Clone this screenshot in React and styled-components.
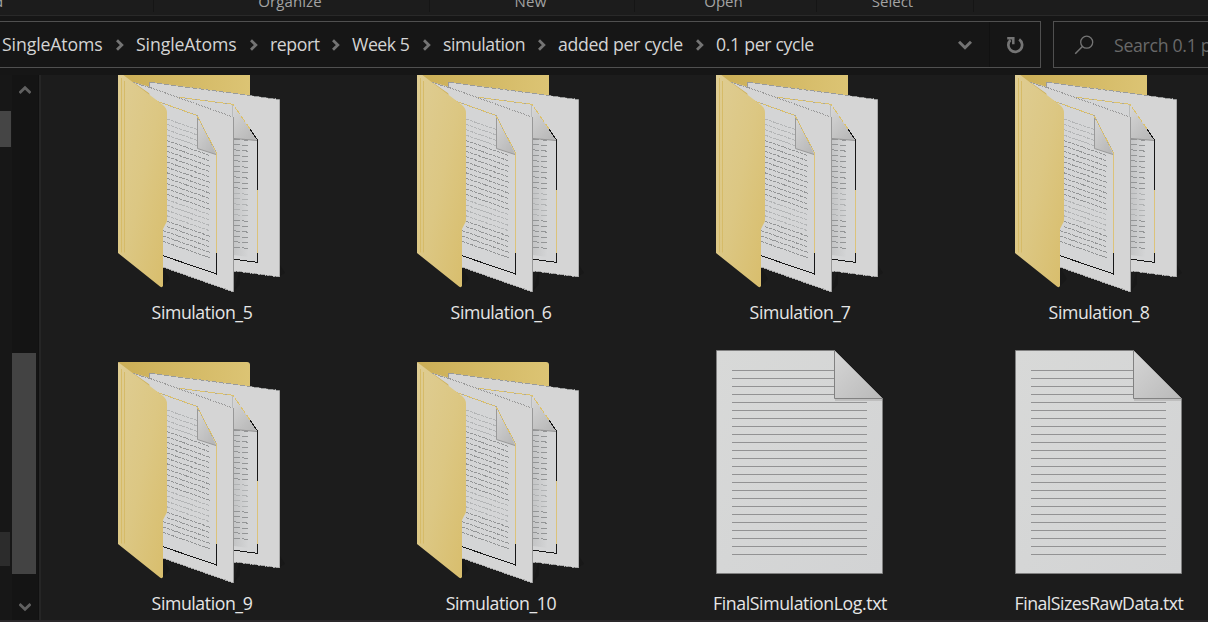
import React from "react";
import styled, { createGlobalStyle } from "styled-components";

const Global = createGlobalStyle`
  * { box-sizing: border-box; }
  body { margin: 0; background: #161616; overflow: hidden; font-family: "Open Sans", "Noto Sans", sans-serif; }
  svg { display: block; flex: none; }
`;

const Window = styled.div`
  width: 1208px; height: 622px; overflow: hidden;
  display: flex; flex-direction: column; background: #161616;
`;
const Ribbon = styled.div`
  height: 16px; flex: none; display: flex; overflow: hidden;
  background: #1c1c1c; border-bottom: 1px solid #292929;
`;
const RibbonGroup = styled.div`
  width: ${(p) => p.$width}px; height: 12px; flex: none;
  display: flex; justify-content: ${(p) => (p.$edge ? "flex-start" : "center")};
  border-right: 1px solid #151515;
`;
const RibbonLabel = styled.span`
  height: 20px; margin-top: -9px; margin-left: ${(p) => p.$shift || 0}px;
  font-size: 15px; line-height: 20px; letter-spacing: ${(p) => p.$track || 0}px; color: #a3a3a3; white-space: nowrap;
`;
const NavBar = styled.div`
  height: 59px; flex: none; display: flex; padding-top: 5px; gap: 12px; overflow: hidden;
`;
const AddressBox = styled.div`
  width: 1041px; height: 47px; flex: none; display: flex; align-items: center;
  border: 1px solid #505050; border-left: 0; padding-left: 2px; background: #161616;
`;
const Crumb = styled.span`
  width: ${(p) => p.$width}px; flex: none; white-space: nowrap; padding-bottom: 2px;
  font-size: 17.7px; line-height: 24px; letter-spacing: ${(p) => p.$track}px; color: #d4d4d4;
`;
const CrumbGap = styled.span`
  width: 33px; flex: none; display: flex; justify-content: center;
`;
const AddressTools = styled.div`
  margin-left: auto; height: 100%; display: flex; align-items: center;
`;
const Tool = styled.div`
  width: ${(p) => p.$width}px; height: 100%; display: flex; align-items: center; justify-content: center;
  border-right: ${(p) => (p.$divided ? "1px solid #111" : "0")};
`;
const SearchBox = styled.div`
  width: 300px; height: 47px; flex: none; display: flex; align-items: center;
  gap: 20px; padding-left: 20px; border: 1px solid #505050; background: #161616;
  font-size: 17.7px; letter-spacing: -0.3px; color: #696969; white-space: nowrap;
`;
const Body = styled.div`
  height: 545px; flex: none; display: flex; overflow: hidden;
`;
const TreeEdge = styled.div`
  width: 12px; padding-top: 36px; background: #171717;
`;
const EdgeThumb = styled.div`
  width: ${(p) => p.$width}px; height: ${(p) => p.$height}px;
  margin-bottom: ${(p) => p.$after || 0}px; background: ${(p) => p.$color};
`;
const ScrollBar = styled.div`
  width: 26px; display: flex; flex-direction: column; align-items: center;
  justify-content: space-between; padding: 10px 1px 8px 0; background: #141414;
`;
const ScrollThumb = styled.div`
  width: 24px; height: 221px; margin-top: 229px; margin-right: 1px; background: #434343;
`;
const Divider = styled.div`
  width: 3px; border-left: 1px solid #111; background: #252525;
`;
const Files = styled.div`
  flex: 1; height: 545px; overflow: hidden; background: #1c1c1c;
`;
const Grid = styled.div`
  display: grid; grid-template-columns: repeat(4, 299px); grid-auto-rows: 291px;
  margin: -26px 0 0 11px; width: 1196px;
`;
const Item = styled.div`
  display: flex; flex-direction: column; align-items: center; padding-right: 3px;
`;
const Name = styled.span`
  width: 200px; margin: -1px 0 0 4px; text-align: center; font-size: 17.7px; line-height: 24px;
  letter-spacing: ${(p) => p.$track}px; color: #e6e6e6; white-space: nowrap;
`;
const StatusEdge = styled.div`
  height: 2px; flex: none; background: #2a282a;
`;

const Chevron = ({ size = "right" }) => {
  if (size === "right")
    return (
      <svg width="8" height="12" viewBox="0 0 8 12"><path d="M1 1.3L5.8 6 1 10.7" fill="none" stroke="#747474" strokeWidth="2.8" /></svg>
    );
  return (
    <svg width="14" height="10" viewBox="0 0 14 10"><path d="M1 1.7L7 7.7 13 1.7" fill="none" stroke="#737373" strokeWidth="3" /></svg>
  );
};

const ScrollArrow = ({ up }) => (
  <svg width="12" height="10" viewBox="0 0 12 10">
    <path d={up ? "M0.5 8L6 2.7 11.5 8" : "M0.5 2L6 7.3 11.5 2"} fill="none" stroke="#606060" strokeWidth="2.8" />
  </svg>
);

const Reload = () => (
  <svg width="18" height="18" viewBox="0 0 18 18">
    <path d="M13.2 3.4A6.9 6.9 0 1 1 4.5 4" fill="none" stroke="#757575" strokeWidth="2.7" />
    <path d="M1.2 2.2H7.3V8.2" fill="none" stroke="#757575" strokeWidth="2.5" />
  </svg>
);

const Magnifier = () => (
  <svg width="20" height="20" viewBox="0 0 20 20">
    <circle cx="12.7" cy="7.2" r="6" fill="none" stroke="#747474" strokeWidth="1.3" />
    <path d="M8.4 11.5L1.2 18.8" stroke="#747474" strokeWidth="1.5" />
  </svg>
);

const frontLines = Array.from({ length: 24 }, (_, i) => {
  const y = 70 + i * 5.38;
  const x0 = i > 20 ? 63 : 67;
  const x1 = i < 4 ? 97 : 110;
  return { d: `M${x0} ${y + (x0 - 67) * 0.35}L${x1} ${y + (x1 - 67) * 0.35}`, soft: i < 4 || (i > 14 && i < 19) };
});
const backLines = Array.from({ length: 21 }, (_, i) => {
  const y = 90 + i * 5.4;
  return { d: `M134 ${y}L149.5 ${y + 1.5}`, soft: i > 9 && i < 15 };
});

const FolderIcon = ({ id }) => (
  <svg width="200" height="252" viewBox="0 0 200 252">
    <defs>
      <linearGradient id={`back${id}`}><stop offset="0" stopColor="#cbae56" /><stop offset="1" stopColor="#dcc474" /></linearGradient>
      <linearGradient id={`cover${id}`} x1="0" y1="0" x2="1" y2="1"><stop offset="0" stopColor="#dfcd93" /><stop offset=".5" stopColor="#dcc783" /><stop offset="1" stopColor="#d8bd6b" /></linearGradient>
      <linearGradient id={`fold${id}`} x1="0" y1="0" x2=".7" y2="1"><stop offset="0" stopColor="#d7d7d7" /><stop offset="1" stopColor="#b8b8b8" /></linearGradient>
      <linearGradient id={`shade${id}`}><stop offset="0" stopColor="#b9babb" /><stop offset="1" stopColor="#d5d6d7" /></linearGradient>
    </defs>
    <path d="M134 221L180 227L185 224L180 216ZM63 218V237L70 230ZM134 242L140 235V220Z" fill="#181818" />
    <path d="M18 22H147Q150 22 150 25V80H60Z" fill={`url(#back${id})`} />
    <path d="M49.5 33L180 50.5V228L134 222L49 200Z" fill="#d5d5d5" />
    <g shapeRendering="crispEdges">
      <path d="M50 33.3L179.5 50.5" fill="none" stroke="#999b9b" strokeDasharray="5 2" />
      <path d="M179.5 50.5V227.5" stroke="#aaa" />
    </g>
    <path d="M77 48L133 55.5L157 91V213L134 210V68Z" fill="#d4d5d6" />
    <path d="M134 91H149V208L134 206Z" fill={`url(#shade${id})`} opacity=".6" />
    <g shapeRendering="crispEdges">
      {backLines.map((l) => <path key={l.d} d={l.d} stroke={l.soft ? "#b1b3b4" : "#939596"} strokeDasharray="6 2" />)}
    </g>
    <path d="M133.5 56L157.5 91.5L133.5 89.5Z" fill={`url(#fold${id})`} />
    <path d="M134 89.5L157.5 91.5" stroke="#939393" />
    <g shapeRendering="crispEdges" fill="none">
      <path d="M77 48L100 51L133 55.3" stroke="#a9a89d" />
      <path d="M77 48L133 55.3L150 80" stroke="#dcc16c" strokeDasharray="8 2" />
      <path d="M150 80L157.5 91V141M157.5 204V213.3L134 210.3" stroke="#171717" />
      <path d="M157.5 141V204" stroke="#dcc37a" />
    </g>
    <path d="M33 33L50 38L133 68V242.7L63 218V54Z" fill="#d5d5d5" />
    <g shapeRendering="crispEdges" fill="none">
      <path d="M33 33.5L50 38.5L133 68" stroke="#999" strokeDasharray="2 1" />
      <path d="M49.5 33V38.5" stroke="#999" />
      <path d="M132.5 56V68" stroke="#b9bbbb" />
      <path d="M133.5 68V243" stroke="#989898" />
      <path d="M63 218.3L133.5 242.8M134 222L179.5 227.8" stroke="#aaa" strokeDasharray="2 1" />
    </g>
    <path d="M55 51.5L97 66.5L116.5 105V225L63 207Z" fill="#d4d5d6" />
    <g shapeRendering="crispEdges">
      {frontLines.map((l) => <path key={l.d} d={l.d} stroke={l.soft ? "#b3b5b6" : "#929495"} strokeDasharray="3.2 .9" />)}
    </g>
    <path d="M97.5 66.5L116.5 105.5L97.5 99.5Z" fill={`url(#fold${id})`} />
    <path d="M97.5 67V99.5L116 105.5" fill="none" stroke="#999" />
    <g shapeRendering="crispEdges" fill="none">
      <path d="M55 51.5L97 66.5L116.5 104" stroke="#aaa79a" />
      <path d="M55 51.5L97 66.5L116.5 104" stroke="#dcc16c" strokeDasharray="4 1" />
      <path d="M116.5 104V204" stroke="#dcc37a" />
      <path d="M116.5 204V225L63 206.7" stroke="#171717" />
    </g>
    <path d="M18 22L63 56Q67 59 67 64V171Q67 173 65.5 175L63 180V237Q62 239 60 237.5L18 204Z" fill={`url(#cover${id})`} />
    <path d="M21.5 29V203.5M24.5 32V203.5" stroke="#d6bb68" />
  </svg>
);

const TextIcon = ({ id }) => (
  <svg width="200" height="252" viewBox="-2 0 200 252">
    <defs>
      <linearGradient id={`page${id}`} x1="0" y1="0" x2="1" y2="1"><stop offset="0" stopColor="#d8d9d8" /><stop offset="1" stopColor="#d2d3d4" /></linearGradient>
      <linearGradient id={`corner${id}`} x1="0" y1="0" x2="1" y2="1"><stop offset="0" stopColor="#d6d6d6" /><stop offset="1" stopColor="#b9b9b9" /></linearGradient>
    </defs>
    <path d="M16.5 10.5H134.5L182.5 58.5V233.5H16.5Z" fill={`url(#page${id})`} stroke="#808080" />
    {Array.from({ length: 24 }, (_, i) => (
      <path key={i} d={`M32 ${30.5 + i * 8}H${i < 4 ? 134 : 167}`} stroke="#929293" />
    ))}
    <path d="M135 60H182" stroke="#bebebe" strokeWidth="2" />
    <path d="M134.5 10.5V58.5H182.5Z" fill={`url(#corner${id})`} />
    <path d="M134.5 10.5V58.5H182.5" fill="none" stroke="#818181" />
  </svg>
);

const crumbs = [
  ["SingleAtoms", 101, -0.12], ["SingleAtoms", 101, -0.12], ["report", 49, -0.4], ["Week 5", 58, -0.45],
  ["simulation", 82, -0.45], ["added per cycle", 125, -0.32], ["0.1 per cycle", 98, -0.33],
];
const items = [
  ["Simulation_5", "folder", -0.42], ["Simulation_6", "folder", -0.42], ["Simulation_7", "folder", -0.42], ["Simulation_8", "folder", -0.42],
  ["Simulation_9", "folder", -0.42], ["Simulation_10", "folder", -0.42], ["FinalSimulationLog.txt", "text", -0.4], ["FinalSizesRawData.txt", "text", -0.5],
];

export default function App() {
  return (
    <Window>
      <Global />
      <Ribbon>
        <RibbonGroup $width={154} $edge><RibbonLabel $shift={-6}>d</RibbonLabel></RibbonGroup>
        <RibbonGroup $width={276}><RibbonLabel $shift={-3} $track={0.1}>Organize</RibbonLabel></RibbonGroup>
        <RibbonGroup $width={205}><RibbonLabel $shift={-3} $track={0.2}>New</RibbonLabel></RibbonGroup>
        <RibbonGroup $width={182}><RibbonLabel $shift={-4}>Open</RibbonLabel></RibbonGroup>
        <RibbonGroup $width={157}><RibbonLabel $shift={-5}>Select</RibbonLabel></RibbonGroup>
      </Ribbon>
      <NavBar>
        <AddressBox>
          {crumbs.map(([text, width, track], i) => (
            <React.Fragment key={i}>
              {i > 0 && <CrumbGap><Chevron /></CrumbGap>}
              <Crumb $width={width} $track={track}>{text}</Crumb>
            </React.Fragment>
          ))}
          <AddressTools>
            <Tool $width={50} $divided><Chevron size="down" /></Tool>
            <Tool $width={50}><Reload /></Tool>
          </AddressTools>
        </AddressBox>
        <SearchBox><Magnifier /><span>Search 0.1 per cycle</span></SearchBox>
      </NavBar>
      <Body>
        <TreeEdge>
          <EdgeThumb $width={11} $height={36} $after={385} $color="#454545" />
          <EdgeThumb $width={10} $height={34} $color="#2c2c2c" />
        </TreeEdge>
        <ScrollBar>
          <ScrollArrow up />
          <ScrollThumb />
          <ScrollArrow />
        </ScrollBar>
        <Divider />
        <Files>
          <Grid>
            {items.map(([name, kind, track], i) => (
              <Item key={name}>
                {kind === "folder" ? <FolderIcon id={i} /> : <TextIcon id={i} />}
                <Name $track={track}>{name}</Name>
              </Item>
            ))}
          </Grid>
        </Files>
      </Body>
      <StatusEdge />
    </Window>
  );
}
